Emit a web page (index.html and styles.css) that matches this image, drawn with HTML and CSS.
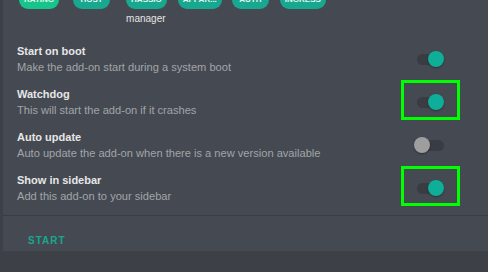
FILE: index.html
```html
<!DOCTYPE html>
<html>
<head>
<title>Add-on options</title>
<meta name="viewport" content="width=device-width,initial-scale=1"/>
<link rel="stylesheet" href="styles.css">
</head>
<body>
<div class="card">
	<div class="chips">
		<div class="chip-col"><span class="chip rating">RATING</span></div>
		<div class="chip-col"><span class="chip">HOST</span></div>
		<div class="chip-col"><span class="chip">HASSIO</span><span class="chip-note">manager</span></div>
		<div class="chip-col"><span class="chip">APPAR...</span></div>
		<div class="chip-col"><span class="chip">AUTH</span></div>
		<div class="chip-col"><span class="chip">INGRESS</span></div>
	</div>

	<div class="options">
		<div class="row">
			<div class="text">
				<div class="title">Start on boot</div>
				<div class="desc">Make the add-on start during a system boot</div>
			</div>
			<div class="toggle on"><span class="track"></span><span class="knob"></span></div>
		</div>
		<div class="row">
			<div class="text">
				<div class="title">Watchdog</div>
				<div class="desc">This will start the add-on if it crashes</div>
			</div>
			<div class="toggle on marked"><span class="track"></span><span class="knob"></span></div>
		</div>
		<div class="row">
			<div class="text">
				<div class="title">Auto update</div>
				<div class="desc">Auto update the add-on when there is a new version available</div>
			</div>
			<div class="toggle"><span class="track"></span><span class="knob"></span></div>
		</div>
		<div class="row">
			<div class="text">
				<div class="title">Show in sidebar</div>
				<div class="desc">Add this add-on to your sidebar</div>
			</div>
			<div class="toggle on marked"><span class="track"></span><span class="knob"></span></div>
		</div>
	</div>

	<div class="actions">
		<button class="start">START</button>
	</div>
</div>
</body>
</html>
```

FILE: styles.css
```css
body {
	margin: 0;
	background-color: #3d4047;
	font-family: "Liberation Sans", Arial, sans-serif;
	width: 488px;
	height: 272px;
	overflow: hidden;
}
.card {
	margin-left: 3px;
	width: 500px;
	height: 260px;
	background-color: #454a52;
}
.chips {
	display: flex;
	padding-left: 16px;
	margin-top: -9px;
	height: 46px;
}
.chip-col {
	display: flex;
	flex-direction: column;
	align-items: flex-start;
	margin-right: 12px;
}
.chip {
	display: inline-block;
	box-sizing: border-box;
	min-width: 37px;
	height: 18px;
	line-height: 18px;
	padding: 0 5px;
	border-radius: 9px;
	background-color: #18a88f;
	color: #e8f5f1;
	font-size: 8px;
	font-weight: bold;
	text-align: center;
}
.chip.rating {
	background-color: #17c48c;
}
.chip-col:nth-child(1) { margin-right: 14px; }
.chip-col:nth-child(2) { margin-right: 16px; }
.chip-col:nth-child(3) { margin-right: 11px; }
.chip-col:nth-child(4) { margin-right: 10px; }
.chip-col:nth-child(5) { margin-right: 11px; }
.chip-note {
	margin-top: 4px;
	color: #e4e4e4;
	font-size: 10px;
}
.options {
	padding: 0 0 0 14px;
}
.row {
	display: flex;
	align-items: center;
	height: 43px;
	width: 460px;
}
.text {
	flex: 1;
}
.title {
	color: #e6e6e6;
	font-size: 11px;
	font-weight: bold;
	margin-bottom: 4px;
}
.desc {
	color: #a2a4a8;
	font-size: 11.1px;
}
.toggle {
	position: relative;
	width: 36px;
	height: 20px;
	margin-right: 27px;
}
.track {
	position: absolute;
	left: 3px;
	top: 5px;
	width: 27px;
	height: 11px;
	border-radius: 6px;
	background-color: #393c42;
}
.knob {
	position: absolute;
	left: 0;
	top: 2px;
	width: 16px;
	height: 16px;
	border-radius: 50%;
	background-color: #9e9e9e;
	box-shadow: 0 1px 2px rgba(0,0,0,0.35);
}
.toggle.on .knob {
	left: 14px;
	background-color: #0fae98;
}
.toggle.marked::after {
	content: "";
	position: absolute;
	left: -13px;
	top: -12px;
	width: 53px;
	height: 34px;
	border: 3px solid #00ff00;
}
.actions {
	margin-top: 6px;
	border-top: 1px solid #3a3d44;
	padding: 14px 0 0 22px;
}
.start {
	background: none;
	border: none;
	padding: 3px;
	color: #17a68f;
	font-family: "Liberation Sans", Arial, sans-serif;
	font-size: 10px;
	font-weight: bold;
	letter-spacing: 1px;
}
```
